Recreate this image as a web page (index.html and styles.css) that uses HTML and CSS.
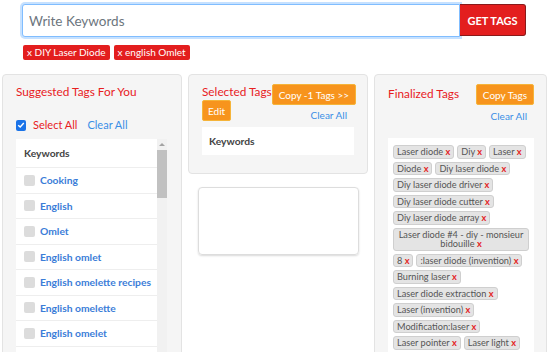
FILE: index.html
```html
<!DOCTYPE html>
<html>
<head>
    <title>Tag Generator</title>
    <link rel="stylesheet" href="styles.css">
</head>
<body>
    <div class="search-area">
        <div class="search-bar">
            <input type="text" class="search-input" placeholder="Write Keywords">
            <button class="get-btn">GET TAGS</button>
        </div>
        <div class="keyword-chips">
            <span class="chip">x DIY Laser Diode</span>
            <span class="chip">x english Omlet</span>
        </div>
    </div>

    <div class="columns">
        <!-- Önerilen etiketler -->
        <div class="panel suggested">
            <div class="panel-title">Suggested Tags For You</div>
            <div class="select-row">
                <span class="check-on">
                    <svg width="8" height="8" viewBox="0 0 8 8"><path d="M1.2 4.2 L3.2 6 L6.8 2" fill="none" stroke="#fff" stroke-width="1.4"/></svg>
                </span>
                <a href="#" class="link-red">Select All</a>
                <a href="#" class="link-blue">Clear All</a>
            </div>
            <div class="table-wrap">
                <div class="kw-table">
                    <div class="kw-head">Keywords</div>
                    <div class="kw-row"><span class="check-off"></span>Cooking</div>
                    <div class="kw-row"><span class="check-off"></span>English</div>
                    <div class="kw-row"><span class="check-off"></span>Omlet</div>
                    <div class="kw-row"><span class="check-off"></span>English omlet</div>
                    <div class="kw-row"><span class="check-off"></span>English omelette recipes</div>
                    <div class="kw-row"><span class="check-off"></span>English omelette</div>
                    <div class="kw-row"><span class="check-off"></span>English omelet</div>
                    <div class="kw-row"><span class="check-off"></span>Omelette</div>
                </div>
                <div class="scroll-rail">
                    <div class="scroll-up"></div>
                    <div class="scroll-thumb"></div>
                </div>
            </div>
        </div>

        <!-- Seçilen etiketler -->
        <div class="middle-col">
            <div class="panel selected">
                <div class="head-row">
                    <div class="panel-title">Selected Tags</div>
                    <button class="orange-btn">Copy -1 Tags &gt;&gt;</button>
                </div>
                <div class="edit-row">
                    <button class="orange-btn">Edit</button>
                    <a href="#" class="link-blue">Clear All</a>
                </div>
                <div class="selected-box">Keywords</div>
            </div>
            <div class="empty-card"></div>
        </div>

        <!-- Son etiketler -->
        <div class="panel finalized">
            <div class="head-row">
                <div class="panel-title final-title">Finalized Tags</div>
                <button class="orange-btn">Copy Tags</button>
            </div>
            <div class="clear-row"><a href="#" class="link-blue">Clear All</a></div>
            <div class="tag-list">
                <span class="tag">Laser diode <b>x</b></span>
                <span class="tag">Diy <b>x</b></span>
                <span class="tag">Laser <b>x</b></span>
                <span class="tag">Diode <b>x</b></span>
                <span class="tag">Diy laser diode <b>x</b></span>
                <span class="tag">Diy laser diode driver <b>x</b></span>
                <span class="tag">Diy laser diode cutter <b>x</b></span>
                <span class="tag">Diy laser diode array <b>x</b></span>
                <span class="tag">Laser diode #4 - diy - monsieur bidouille <b>x</b></span>
                <span class="tag">8 <b>x</b></span>
                <span class="tag">:laser diode (invention) <b>x</b></span>
                <span class="tag">Burning laser <b>x</b></span>
                <span class="tag">Laser diode extraction <b>x</b></span>
                <span class="tag">Laser (invention) <b>x</b></span>
                <span class="tag">Modification:laser <b>x</b></span>
                <span class="tag">Laser pointer <b>x</b></span>
                <span class="tag">Laser light <b>x</b></span>
                <span class="tag">Laser diode kit <b>x</b></span>
                <span class="tag">Laser module <b>x</b></span>
            </div>
        </div>
    </div>
</body>
</html>
```

FILE: styles.css
```css
body {
    margin: 0;
    background-color: white;
    font-family: Lato, Arial, sans-serif;
    color: #333;
}
a {
    text-decoration: none;
}
button {
    font-family: inherit;
    cursor: pointer;
}
.search-area {
    padding: 4px 0 0 22px;
}
.search-bar {
    display: flex;
    width: 504px;
}
.search-input {
    flex: 1;
    height: 33px;
    box-sizing: border-box;
    border: 1px solid #80bdff;
    border-radius: 3px 0 0 3px;
    box-shadow: 0 0 0 2px rgba(128, 189, 255, 0.45);
    padding: 0 6px;
    font-family: inherit;
    font-size: 13.5px;
    outline: none;
}
.search-input::placeholder {
    color: #6c757d;
}
.get-btn {
    width: 66px;
    height: 32px;
    background-color: #e31e1e;
    color: white;
    border: 1px solid #8a1a1a;
    border-left: none;
    border-radius: 0 3px 3px 0;
    font-weight: bold;
    font-size: 11px;
    padding: 0;
}
.keyword-chips {
    display: flex;
    gap: 4px;
    margin-top: 8px;
    padding-left: 1px;
}
.chip {
    background-color: #e31e1e;
    color: white;
    font-size: 10px;
    line-height: 15px;
    padding: 0 4px;
    border-radius: 2px;
}
.columns {
    display: grid;
    grid-template-columns: 180px 180px 173px;
    column-gap: 6px;
    align-items: start;
    padding-left: 2px;
    margin-top: 14px;
}
.panel {
    background-color: #f5f5f5;
    border: 1px solid #e3e3e3;
    border-radius: 4px;
    padding: 9px 13px;
}
.panel-title {
    color: #e8201e;
    font-size: 11.8px;
    line-height: 16px;
    white-space: nowrap;
}
.select-row {
    display: flex;
    align-items: center;
    margin-top: 17px;
    font-size: 11px;
    line-height: 16px;
}
.check-on {
    width: 10px;
    height: 11px;
    background-color: #1a73e8;
    border-radius: 2px;
    display: flex;
    align-items: center;
    justify-content: center;
    margin-right: 7px;
}
.link-red {
    color: #e8201e;
    margin-right: 10px;
}
.link-blue {
    color: #3a8ee6;
    font-size: 10px;
}
.select-row .link-blue {
    font-size: 11px;
}
.table-wrap {
    display: flex;
    margin-top: 6px;
    height: 240px;
}
.kw-table {
    width: 141px;
    background-color: white;
}
.kw-head {
    height: 28px;
    line-height: 28px;
    padding-left: 8px;
    font-size: 10.3px;
    font-weight: bold;
    color: #444;
    border-bottom: 1px solid #eee;
}
.kw-row {
    display: flex;
    align-items: center;
    height: 24.5px;
    padding-left: 8px;
    font-size: 10.3px;
    font-weight: bold;
    color: #3b7dd8;
    border-bottom: 1px solid #eee;
    white-space: nowrap;
}
.check-off {
    width: 11px;
    height: 11px;
    background-color: #dcdcdc;
    border-radius: 2px;
    margin-right: 5px;
}
.scroll-rail {
    width: 10px;
    background-color: #f1f1f1;
}
.scroll-up {
    width: 0;
    height: 0;
    margin: 4px auto 4px;
    border-left: 3px solid transparent;
    border-right: 3px solid transparent;
    border-bottom: 3px solid #a3a3a3;
}
.scroll-thumb {
    height: 48px;
    margin-top: 1px;
    background-color: #c1c1c1;
}
.head-row {
    display: flex;
    justify-content: space-between;
    align-items: flex-start;
}
.orange-btn {
    background-color: #f7941d;
    border: 1px solid #f5b43a;
    border-radius: 2px;
    color: white;
    font-size: 10px;
    height: 21px;
    padding: 0 6px;
    white-space: nowrap;
}
.selected .head-row .orange-btn {
    margin-right: 1px;
}
.edit-row {
    display: flex;
    justify-content: space-between;
    margin-top: -5px;
}
.edit-row .orange-btn {
    padding: 0 5px;
}
.edit-row .link-blue {
    align-self: flex-end;
    margin-right: 7px;
}
.selected {
    padding-bottom: 18px;
}
.selected-box {
    margin-top: 6px;
    height: 28px;
    line-height: 28px;
    background-color: white;
    padding-left: 7px;
    font-size: 10.3px;
    font-weight: bold;
    color: #444;
}
.empty-card {
    margin: 13px 9px 0 10px;
    height: 66px;
    border: 1px solid #ddd;
    border-radius: 4px;
    box-shadow: 0 1px 2px rgba(0, 0, 0, 0.15);
}
.final-title {
    margin-top: 2px;
}
.finalized .head-row .orange-btn {
    margin-right: -1px;
}
.clear-row {
    text-align: right;
    margin-top: 1px;
    padding-right: 6px;
    line-height: 16px;
}
.tag-list {
    display: flex;
    flex-wrap: wrap;
    gap: 3px;
    margin: 14px -1px 0 0;
    padding: 7px 5px;
    background-color: white;
}
.tag {
    background-color: #e4e4e4;
    border: 1px solid #cfcfcf;
    border-radius: 3px;
    padding: 1px 3px;
    font-size: 9.2px;
    line-height: 9.5px;
    color: #555;
    text-align: center;
}
.tag b {
    color: #e31e1e;
}
```
